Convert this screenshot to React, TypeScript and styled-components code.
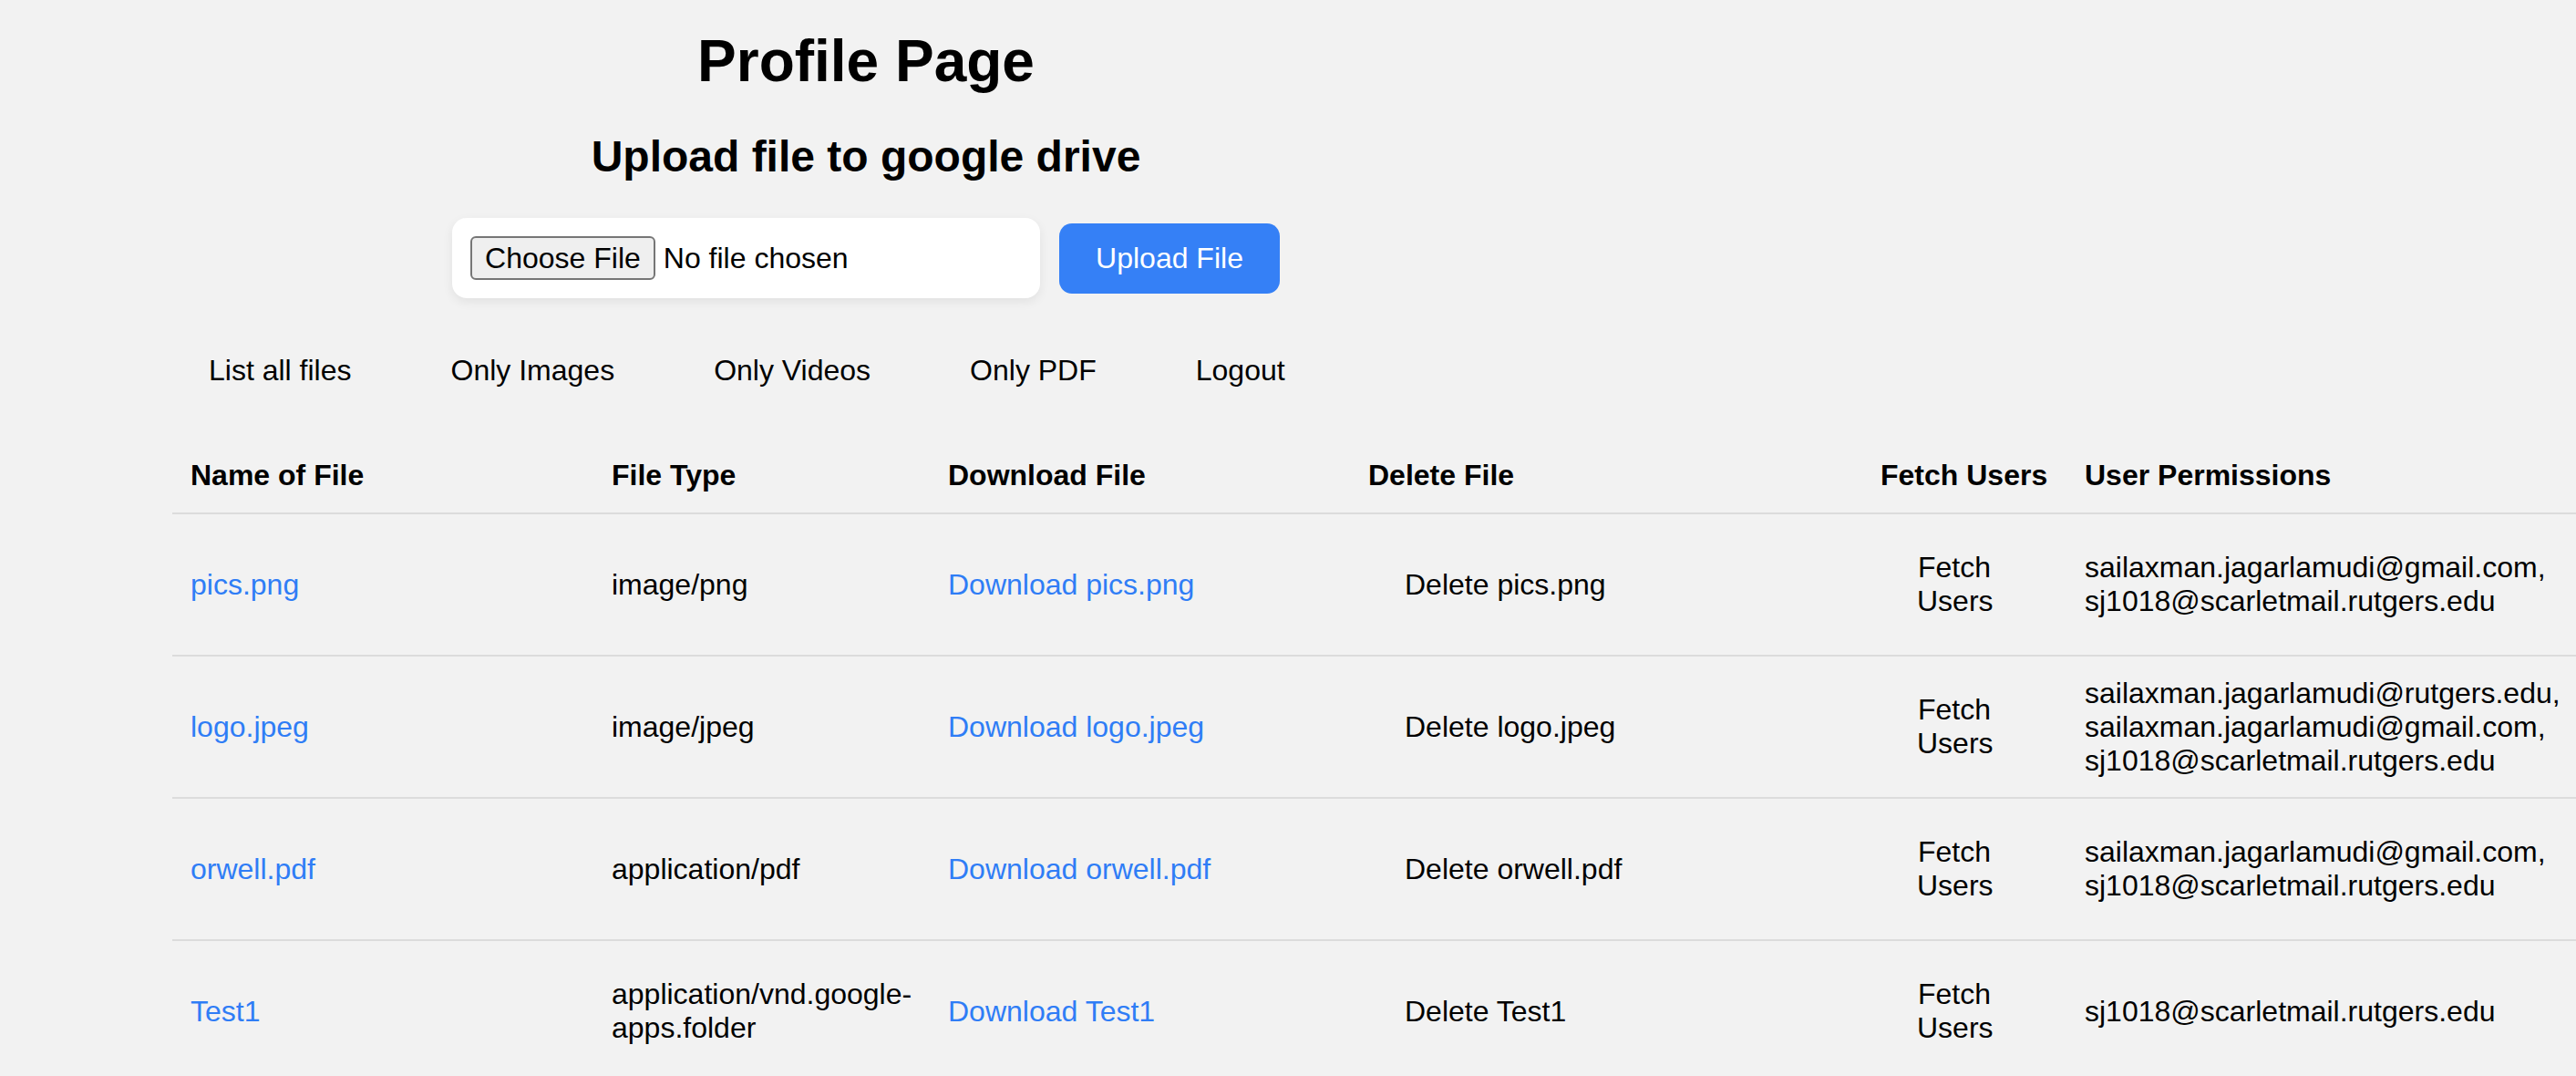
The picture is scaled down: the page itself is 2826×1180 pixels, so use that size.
import React from 'react'
import styled, { createGlobalStyle } from 'styled-components'

const GlobalStyle = createGlobalStyle`
    html, body {
        margin: 0;
        padding: 0;
        background: #f2f2f2;
    }
    body {
        font-family: "Liberation Sans", Arial, sans-serif;
        color: #000;
    }
    * {
        box-sizing: border-box;
    }
`

const Page = styled.div`
    display: flex;
    flex-direction: column;
    min-height: 1180px;
    background: #f2f2f2;
`

const Top = styled.div`
    width: 1900px;
    display: flex;
    flex-direction: column;
    align-items: center;
`

const Title = styled.h1`
    margin: 30px 0 0;
    font-size: 64px;
    font-weight: 700;
    line-height: normal;
`

const Subtitle = styled.h2`
    margin: 40px 0 0;
    font-size: 48px;
    font-weight: 700;
    line-height: normal;
`

const UploadRow = styled.div`
    display: flex;
    align-items: center;
    gap: 21px;
    margin-top: 40px;
`

const FileCard = styled.div`
    display: flex;
    align-items: center;
    width: 645px;
    height: 88px;
    padding: 20px;
    background: #fff;
    border-radius: 16px;
    box-shadow: 0 4px 12px rgba(0, 0, 0, 0.07);
    font-size: 32px;
`

const ChooseButton = styled.label`
    display: flex;
    align-items: center;
    height: 48px;
    padding: 0 14px;
    border: 2px solid #767676;
    border-radius: 6px;
    background: #efefef;
    font-size: 32px;
    cursor: default;

    input {
        display: none;
    }
`

const NoFile = styled.span`
    margin-left: 9px;
`

const UploadButton = styled.button`
    height: 77px;
    padding: 0 40px;
    border: none;
    border-radius: 14px;
    background: #3580f6;
    color: #fff;
    font-family: inherit;
    font-size: 32px;
`

const Nav = styled.nav`
    display: flex;
    gap: 109px;
    margin-top: 61px;
    padding-left: 229px;
`

const NavButton = styled.button`
    padding: 0;
    border: none;
    background: none;
    font-family: inherit;
    font-size: 32px;
    line-height: normal;
    color: #000;
`

const Table = styled.div`
    margin-top: 55px;
    margin-left: 189px;
`

const cols = '462px 369px 461px 562px 224px 1fr'

const HeaderRow = styled.div`
    display: grid;
    grid-template-columns: ${cols};
    align-items: center;
    height: 84px;
    border-bottom: 2px solid #dcdcdc;
    font-size: 32px;
    font-weight: 700;
`

const Row = styled.div`
    display: grid;
    grid-template-columns: ${cols};
    align-items: center;
    height: 156px;
    border-bottom: 2px solid #dcdcdc;
    font-size: 32px;
    line-height: normal;
`

const Cell = styled.div`
    padding-left: 20px;
`

const FileLink = styled.a`
    color: #2f7df6;
    text-decoration: none;
`

const PlainButton = styled.button<{ $narrow?: boolean }>`
    padding: 0 40px;
    border: none;
    background: none;
    font-family: inherit;
    font-size: 32px;
    line-height: normal;
    color: #000;
    text-align: center;
    width: ${p => (p.$narrow ? '162px' : 'auto')};
`

type FileRow = {
    name: string
    type: string
    users: string[]
}

const files: FileRow[] = [
    {
        name: 'pics.png',
        type: 'image/png',
        users: ['sailaxman.jagarlamudi@gmail.com', 'sj1018@scarletmail.rutgers.edu'],
    },
    {
        name: 'logo.jpeg',
        type: 'image/jpeg',
        users: [
            'sailaxman.jagarlamudi@rutgers.edu',
            'sailaxman.jagarlamudi@gmail.com',
            'sj1018@scarletmail.rutgers.edu',
        ],
    },
    {
        name: 'orwell.pdf',
        type: 'application/pdf',
        users: ['sailaxman.jagarlamudi@gmail.com', 'sj1018@scarletmail.rutgers.edu'],
    },
    {
        name: 'Test1',
        type: 'application/vnd.google-apps.folder',
        users: ['sj1018@scarletmail.rutgers.edu'],
    },
]

const App = () => {
    return (
        <Page>
            <GlobalStyle />
            <Top>
                <Title>Profile Page</Title>
                <Subtitle>Upload file to google drive</Subtitle>
                <UploadRow>
                    <FileCard>
                        <ChooseButton>
                            Choose File
                            <input type="file" />
                        </ChooseButton>
                        <NoFile>No file chosen</NoFile>
                    </FileCard>
                    <UploadButton>Upload File</UploadButton>
                </UploadRow>
            </Top>
            <Nav>
                <NavButton>List all files</NavButton>
                <NavButton>Only Images</NavButton>
                <NavButton>Only Videos</NavButton>
                <NavButton>Only PDF</NavButton>
                <NavButton>Logout</NavButton>
            </Nav>
            <Table>
                <HeaderRow>
                    <Cell>Name of File</Cell>
                    <Cell>File Type</Cell>
                    <Cell>Download File</Cell>
                    <Cell>Delete File</Cell>
                    <Cell>Fetch Users</Cell>
                    <Cell>User Permissions</Cell>
                </HeaderRow>
                {files.map(f => (
                    <Row key={f.name}>
                        <Cell>
                            <FileLink href="#">{f.name}</FileLink>
                        </Cell>
                        <Cell>{f.type}</Cell>
                        <Cell>
                            <FileLink href="#">Download {f.name}</FileLink>
                        </Cell>
                        <Cell>
                            <PlainButton>Delete {f.name}</PlainButton>
                        </Cell>
                        <Cell>
                            <PlainButton $narrow>Fetch Users</PlainButton>
                        </Cell>
                        <Cell>
                            {f.users.map((u, i) => (
                                <div key={u}>
                                    {u}
                                    {i < f.users.length - 1 ? ',' : ''}
                                </div>
                            ))}
                        </Cell>
                    </Row>
                ))}
            </Table>
        </Page>
    )
}

export default App
